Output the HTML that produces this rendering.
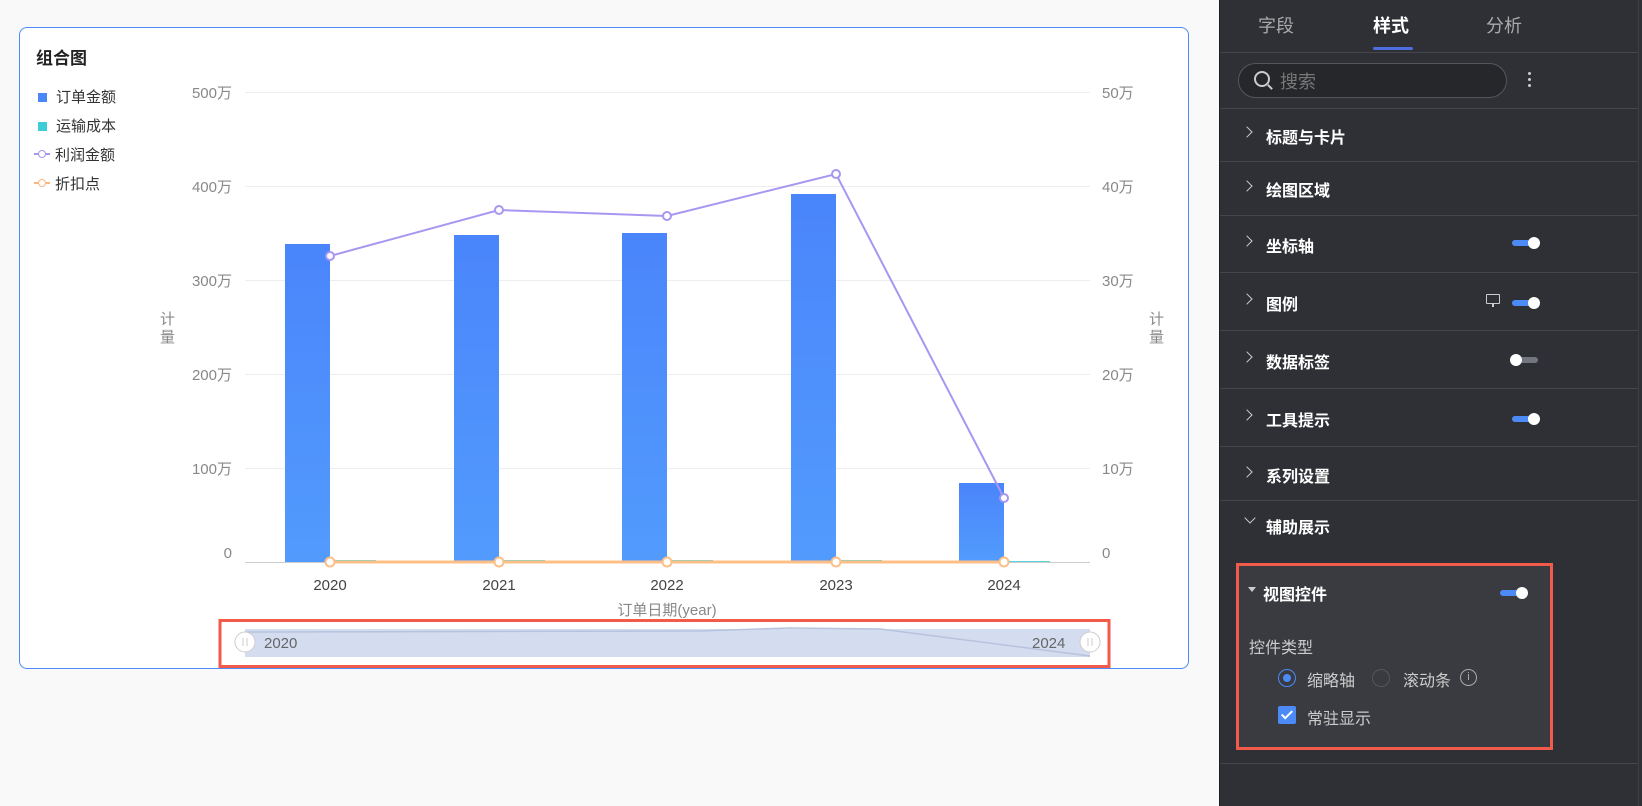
<!DOCTYPE html>
<html><head><meta charset="utf-8"><style>
*{margin:0;padding:0;box-sizing:border-box}
body{width:1642px;height:806px;background:#f9f9f9;font-family:"Liberation Sans","Noto Sans CJK SC",sans-serif;position:relative;overflow:hidden}
.card{position:absolute;left:19px;top:27px;width:1170px;height:642px;background:#fff;border:1px solid #4c8bf5;border-radius:8px}
.panel{position:absolute;left:1219px;top:0;width:423px;height:806px;background:#2f3036;border-left:1px solid #1f2024}
.abs{position:absolute}
.row{position:absolute;left:0;width:419px;border-bottom:1px solid #45464c;color:#fff;font-size:16px;font-weight:bold}
.row .t{position:absolute;left:46px}
.row .c{position:absolute;left:26px;width:8px;height:8px;border-right:1.5px solid #ccc;border-top:1.5px solid #ccc;transform:rotate(45deg)}
.tg{position:absolute;width:26px;height:6px;border-radius:3px;background:#4c8bf5}
.tg::after{content:"";position:absolute;right:-2px;top:-3px;width:12px;height:12px;border-radius:50%;background:#fff}
.tg.off{background:#737680}
.tg.off::after{left:-2px;right:auto}
.lg{display:inline-block;position:relative;width:16px;height:2px;margin:0 5px 4px -4px;vertical-align:middle}
.lg i{position:absolute;left:4px;top:-3px;width:8px;height:8px;border-radius:50%;background:#fff;border:1.5px solid}
</style></head><body>
<div class="card"></div>
<div class="abs" style="left:36px;top:44px;font-size:17px;font-weight:bold;color:#222">组合图</div>
<div class="abs" style="left:38px;top:83px;font-size:15px;color:#333;line-height:29px">
<div><span style="display:inline-block;width:9px;height:9px;background:#4b87f7;margin-right:9px"></span>订单金额</div>
<div><span style="display:inline-block;width:9px;height:9px;background:#3ccdd6;margin-right:9px"></span>运输成本</div>
<div><span class="lg" style="background:#a896f0"><i style="border-color:#a896f0"></i></span>利润金额</div>
<div><span class="lg" style="background:#fbb77d"><i style="border-color:#fbb77d"></i></span>折扣点</div>
</div>
<svg class="abs" style="left:0;top:0" width="1200" height="680">
<defs><linearGradient id="g" x1="0" y1="0" x2="0" y2="1"><stop offset="0" stop-color="#4a85fb"/><stop offset="1" stop-color="#529bfd"/></linearGradient></defs>
<g stroke="#eee" stroke-width="1">
<line x1="245" y1="92.5" x2="1090" y2="92.5"/><line x1="245" y1="186.5" x2="1090" y2="186.5"/><line x1="245" y1="280.5" x2="1090" y2="280.5"/><line x1="245" y1="374.5" x2="1090" y2="374.5"/><line x1="245" y1="468.5" x2="1090" y2="468.5"/></g>
<line x1="245" y1="562.5" x2="1090" y2="562.5" stroke="#ccc"/>
<g font-size="15" fill="#888" text-anchor="end"><text x="232" y="98">500万</text><text x="232" y="192">400万</text><text x="232" y="286">300万</text><text x="232" y="380">200万</text><text x="232" y="474">100万</text><text x="232" y="558">0</text></g>
<g font-size="15" fill="#888"><text x="1102" y="98">50万</text><text x="1102" y="192">40万</text><text x="1102" y="286">30万</text><text x="1102" y="380">20万</text><text x="1102" y="474">10万</text><text x="1102" y="558">0</text></g>
<g font-size="15" fill="#888"><text x="160" y="324">计</text><text x="160" y="342">量</text><text x="1149" y="324">计</text><text x="1149" y="342">量</text></g>
<g fill="url(#g)"><rect x="285" y="244" width="45" height="318"/><rect x="454" y="235" width="45" height="327"/><rect x="622" y="233" width="45" height="329"/><rect x="791" y="194" width="45" height="368"/><rect x="959" y="483" width="45" height="79"/></g>
<g fill="#5ad3da"><rect x="331" y="560" width="45" height="2"/><rect x="500" y="560" width="45" height="2"/><rect x="668" y="560" width="45" height="2"/><rect x="837" y="560" width="45" height="2"/><rect x="1005" y="561" width="45" height="1"/></g>
<polyline points="330,256 499,210 667,216 836,174 1004,498" fill="none" stroke="#a896f0" stroke-width="2"/>
<g fill="#fff" stroke="#a896f0" stroke-width="2"><circle cx="330" cy="256" r="4"/><circle cx="499" cy="210" r="4"/><circle cx="667" cy="216" r="4"/><circle cx="836" cy="174" r="4"/><circle cx="1004" cy="498" r="4"/></g>
<line x1="330" y1="562" x2="1004" y2="562" stroke="#fdbf86" stroke-width="3"/>
<g fill="#fff" stroke="#fdbf86" stroke-width="2"><circle cx="330" cy="562" r="4.5"/><circle cx="499" cy="562" r="4.5"/><circle cx="667" cy="562" r="4.5"/><circle cx="836" cy="562" r="4.5"/><circle cx="1004" cy="562" r="4.5"/></g>
<g font-size="15" fill="#444" text-anchor="middle"><text x="330" y="590">2020</text><text x="499" y="590">2021</text><text x="667" y="590">2022</text><text x="836" y="590">2023</text><text x="1004" y="590">2024</text></g>
<text x="667" y="615" font-size="15" fill="#888" text-anchor="middle">订单日期(year)</text>
<rect x="245" y="629" width="845" height="28" fill="#d4dcf0"/>
<path d="M245 632 L700 631 L790 628 L880 629 L1090 656" fill="none" stroke="#b8c2dc" stroke-width="1.5"/>
<g fill="#fff" stroke="#ccc"><circle cx="245" cy="642" r="10"/><circle cx="1090" cy="642" r="10"/></g>
<g stroke="#ccc"><line x1="243" y1="638" x2="243" y2="646"/><line x1="247" y1="638" x2="247" y2="646"/><line x1="1088" y1="638" x2="1088" y2="646"/><line x1="1092" y1="638" x2="1092" y2="646"/></g>
<text x="264" y="648" font-size="15" fill="#666">2020</text><text x="1032" y="648" font-size="15" fill="#666">2024</text>
<rect x="220" y="620.5" width="889" height="46" fill="none" stroke="#f25a4a" stroke-width="3"/>
</svg>
<div class="panel">
<div class="abs" style="left:38px;top:12px;font-size:18px;color:#aaa">字段</div>
<div class="abs" style="left:153px;top:12px;font-size:18px;color:#fff;font-weight:bold">样式</div>
<div class="abs" style="left:153px;top:47px;width:40px;height:3px;background:#4d6ee0;border-radius:2px"></div>
<div class="abs" style="left:266px;top:12px;font-size:18px;color:#aaa">分析</div>
<div class="abs" style="left:0;top:52px;width:419px;height:1px;background:#45464c"></div>
<div class="abs" style="left:18px;top:63px;width:269px;height:35px;border:1px solid #55565c;border-radius:18px;background:#26272b"></div>
<div class="abs" style="left:34px;top:71px;width:16px;height:16px;border:2px solid #ccc;border-radius:50%"></div>
<div class="abs" style="left:47px;top:86px;width:6px;height:2px;background:#ccc;transform:rotate(45deg)"></div>
<div class="abs" style="left:60px;top:68px;font-size:18px;color:#777">搜索</div>
<div class="abs" style="left:308px;top:72px;width:3px;height:3px;border-radius:50%;background:#ccc;box-shadow:0 6px 0 #ccc,0 12px 0 #ccc"></div>
<div class="row" style="top:53px;height:56px"></div>
<div class="row" style="top:109px;height:53px"><span class="c" style="top:19px;left:23px"></span><span class="t" style="top:15px">标题与卡片</span></div>
<div class="row" style="top:162px;height:54px"><span class="c" style="top:20px;left:23px"></span><span class="t" style="top:15px">绘图区域</span></div>
<div class="row" style="top:216px;height:57px"><span class="c" style="top:21px;left:23px"></span><span class="t" style="top:17px">坐标轴</span><span class="tg" style="left:292px;top:24px"></span></div>
<div class="row" style="top:273px;height:58px"><span class="c" style="top:22px;left:23px"></span><span class="t" style="top:18px">图例</span><span class="abs" style="left:266px;top:21px;width:14px;height:10px;border:1.5px solid #ccc;border-radius:1px"></span><span class="abs" style="left:272px;top:31px;width:2px;height:3px;background:#ccc"></span><span class="tg" style="left:292px;top:27px"></span></div>
<div class="row" style="top:331px;height:58px"><span class="c" style="top:22px;left:23px"></span><span class="t" style="top:18px">数据标签</span><span class="tg off" style="left:292px;top:26px"></span></div>
<div class="row" style="top:389px;height:58px"><span class="c" style="top:22px;left:23px"></span><span class="t" style="top:18px">工具提示</span><span class="tg" style="left:292px;top:27px"></span></div>
<div class="row" style="top:447px;height:54px"><span class="c" style="top:21px;left:23px"></span><span class="t" style="top:16px">系列设置</span></div>
<div class="abs" style="left:26px;top:514px;width:8px;height:8px;border-right:1.5px solid #ccc;border-bottom:1.5px solid #ccc;transform:rotate(45deg)"></div>
<div class="abs" style="left:46px;top:514px;color:#fff;font-size:16px;font-weight:bold">辅助展示</div>
<div class="abs" style="left:16px;top:563px;width:317px;height:187px;background:#3a3b41;border:3px solid #f25a4a"></div>
<div class="abs" style="left:28px;top:587px;width:0;height:0;border-left:4px solid transparent;border-right:4px solid transparent;border-top:5px solid #ccc"></div>
<div class="abs" style="left:43px;top:581px;color:#fff;font-size:16px;font-weight:bold">视图控件</div>
<span class="tg" style="left:280px;top:590px"></span>
<div class="abs" style="left:29px;top:634px;color:#ccc;font-size:16px">控件类型</div>
<div class="abs" style="left:58px;top:669px;width:18px;height:18px;border:1.5px solid #4c8bf5;border-radius:50%"></div>
<div class="abs" style="left:63px;top:674px;width:8px;height:8px;background:#4c8bf5;border-radius:50%"></div>
<div class="abs" style="left:87px;top:667px;color:#ccc;font-size:16px">缩略轴</div>
<div class="abs" style="left:152px;top:669px;width:18px;height:18px;border:1px solid #55565c;border-radius:50%"></div>
<div class="abs" style="left:183px;top:667px;color:#ccc;font-size:16px">滚动条</div>
<div class="abs" style="left:240px;top:669px;width:17px;height:17px;border:1.2px solid #aaa;border-radius:50%;color:#aaa;font-size:11px;text-align:center;line-height:15px">i</div>
<div class="abs" style="left:58px;top:706px;width:18px;height:18px;background:#4c8bf5;border-radius:2px"></div>
<div class="abs" style="left:64px;top:708px;width:6px;height:11px;border-right:2.5px solid #fff;border-bottom:2.5px solid #fff;transform:rotate(45deg)"></div>
<div class="abs" style="left:87px;top:705px;color:#ccc;font-size:16px">常驻显示</div>
<div class="abs" style="left:0;top:763px;width:419px;height:1px;background:#45464c"></div>
<div class="abs" style="left:418px;top:0;width:1px;height:806px;background:#3e3f45"></div>
</div>
</body></html>
